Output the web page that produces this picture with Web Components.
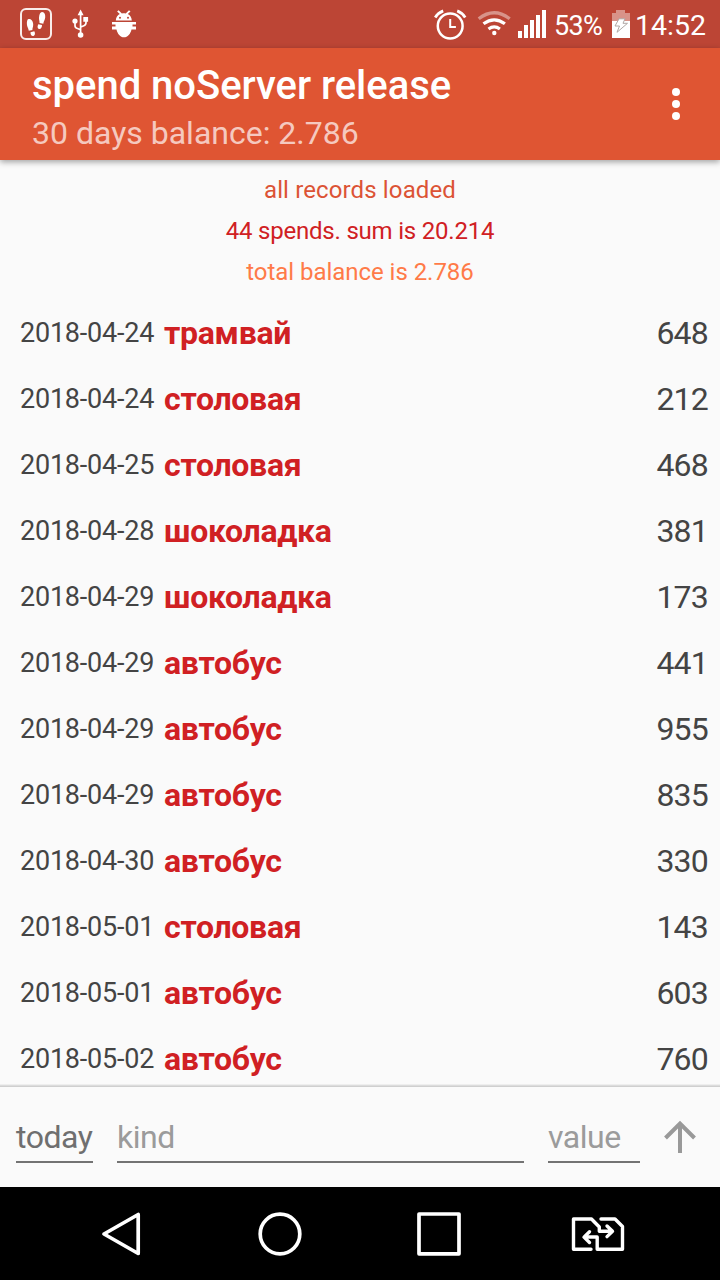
<!DOCTYPE html>
<html lang="ru">
<head>
<meta charset="utf-8">
<title>spend</title>
<style>
html,body{margin:0;padding:0}
body{width:720px;height:1280px;overflow:hidden;background:#fafafa;font-family:Roboto,"Noto Sans",sans-serif}
</style>
</head>
<body>
<spend-app></spend-app>
<script>
const define = (name, html) => {
  const t = document.createElement('template');
  t.innerHTML = html;
  customElements.define(name, class extends HTMLElement {
    constructor() {
      super();
      this.attachShadow({mode: 'open'}).append(t.content.cloneNode(true));
    }
  });
};

define('status-bar', `<style>
:host{display:block;height:48px;background:#bc4535;color:#fff}
.bar{display:flex;height:48px;align-items:center;position:relative}
svg{display:block;flex:none}
.l{width:434px;flex:none}
.pct,.time{line-height:48px;padding-top:2px;box-sizing:border-box;height:48px;white-space:nowrap;flex:none}
.pct{font-size:27px;letter-spacing:-.7px;width:57px}
.time{font-size:28.5px;margin-left:4px}
</style>
<div class="bar">
<svg class="l" width="434" height="48" viewBox="0 0 434 48" fill="#fff">
<rect x="21" y="9" width="30" height="30" rx="5" fill="none" stroke="#fff" stroke-width="2" stroke-opacity=".9"/>
<path d="M28.500 19c2.700-.6 4.700 2.200 4.700 5.500 0 2.700-.8 3.300-.8 5.500l-3.600.8c-.4-2.700-1.800-3.800-1.900-6.600-.1-2.600.3-4.800 1.600-5.200zM30.500 32.200l3.800-1c1.200 2.200.7 4.300-.8 4.700-1.800.5-3.200-1.400-3-3.700zM42.200 12c2.400.3 3.300 2.600 3 5.500-.3 2.800-1.600 3.800-1.900 6.200l-3.800-.8c.2-2.300-.7-3.100-.5-5.500.3-3.300 1.400-5.600 3.200-5.400zM38.300 24.200l3.700.8c.1 2.400-1.100 4.200-2.900 3.900-1.600-.3-2.100-2.400-.8-4.700z"/>
<path d="M80.600 15v20M75 22v3.500q0 2.500 2.500 3l3 1.200M86 19v3.500q0 2.500-2.200 3.200l-3 1.300" fill="none" stroke="#fff" stroke-width="1.700"/>
<path d="M80.600 9.500l3 5.700h-6zM83.300 17h4.800v4.800h-4.800z"/><circle cx="75" cy="21" r="2.600"/><circle cx="80.600" cy="35" r="2.800"/>
<path d="M116 20.400c.2-3 1.700-5.200 4-6.300l-2.700-2.600 1.500-1.200 3.300 3.100c1.200-.3 2.600-.3 3.800 0l3.300-3.100 1.500 1.200-2.700 2.600c2.300 1.100 3.800 3.300 4 6.300z" transform="translate(-.2 0)"/>
<circle cx="120" cy="17.800" r="1" fill="#bc4535"/><circle cx="128" cy="17.800" r="1" fill="#bc4535"/>
<path d="M112 22h24v2.500h-3.500v2H136v3h-4.500c-1 4.500-3.800 7.800-7.500 7.800s-6.500-3.300-7.500-7.800H112v-3h3.500v-2H112z"/>
</svg>
<svg width="120" height="48" viewBox="434 0 120 48" fill="none" stroke="#fff">
<circle cx="450.200" cy="26" r="12.400" stroke-width="2.500"/><path d="M450.200 19v8h5.700" stroke-width="2"/>
<path d="M435.200 17.500q3-4.700 8-6.600M465.200 17.500q-3-4.700-8-6.600" stroke-width="2.800"/>
<path d="M478.700 18.800q15.500-12 31 0" stroke-width="3.300" opacity=".42"/>
<path d="M483.500 23.800q10.700-8 21.400 0M488.500 29q5.700-4.200 11.400 0" stroke-width="3.200"/><circle cx="494.300" cy="33" r="2.200" fill="#fff" stroke="none"/>
<path d="M518 31h4v7h-4zM524 25h4v13h-4zM530 20h4v18h-4zM536 15h4v23h-4zM542 10h4v28h-4z" fill="#fff" stroke="none"/>
</svg>
<span class="pct">53%</span>
<svg width="20" height="48" viewBox="611 0 20 48"><path d="M616 10h9v3h5v8h-18v-8h4z" fill="#fff" opacity=".42"/><path d="M612 21h18v17h-18z" fill="#fff"/><path d="M619 18.800h6l-2 4.500h4.500l-10.500 9 2.500-6.300h-4.500z" fill="#fff" stroke="#b0a8a5" stroke-width="1"/></svg>
<span class="time">14:52</span>
</div>`);

define('app-toolbar', `<style>
:host{display:block;height:112px;background:#df5533;color:#fff;position:relative;z-index:2;box-shadow:0 2px 6px rgba(0,0,0,.36)}
.row{display:flex;justify-content:space-between;height:112px}
.t{padding:15px 0 0 32px;white-space:nowrap}
.a{font-size:40px;font-weight:500;line-height:46px;letter-spacing:-.03px}
.b{font-size:32px;line-height:38px;margin-top:5px;color:rgba(255,255,255,.7)}
svg{display:block}
</style>
<div class="row"><div class="t"><div class="a"><slot name="title"></slot></div><div class="b"><slot name="subtitle"></slot></div></div>
<svg width="88" height="112" fill="#fff"><circle cx="44" cy="44" r="4"/><circle cx="44" cy="56" r="4"/><circle cx="44" cy="68" r="4"/></svg></div>`);

define('summary-line', `<style>
:host{display:block;height:41px;line-height:41px;text-align:center;font-size:24px}
</style><slot></slot>`);

customElements.define('spend-row', class extends HTMLElement {
  connectedCallback() {
    this.attachShadow({mode: 'open'}).innerHTML = `<style>
:host{display:flex;height:66px;line-height:66px;padding:0 12px 0 20px;color:#444;white-space:nowrap}
.d{font-size:27px;width:144px;letter-spacing:-.22px}
.k{font-size:32px;font-weight:700;color:#d02023;flex:1;letter-spacing:-.28px}
.v{font-size:32px;letter-spacing:-.8px}
</style><span class="d">${this.getAttribute('date')}</span><span class="k"><slot></slot></span><span class="v">${this.getAttribute('value')}</span>`;
  }
});

define('text-field', `<style>
:host{display:block;box-sizing:border-box;height:48px;border-bottom:2px solid #737373;font-size:32px;line-height:44px;letter-spacing:-.45px;color:#9b9b9b;white-space:nowrap}
</style><slot></slot>`);

define('entry-bar', `<style>
:host{display:block;height:103px;background:#fafafa}
.line{height:3px;background:linear-gradient(#eee 0 1px,#dcdcdc 1px 2px,#cfcfcf 2px)}
.row{display:flex;padding:28px 24px 0 16px;height:72px}
.d{width:77px;margin-right:24px;color:#6f6f6f}
.k{width:407px;margin-right:24px}
.v{width:92px;margin-right:24px}
svg{display:block}
</style><div class="line"></div><div class="row"><text-field class="d">today</text-field><text-field class="k">kind</text-field><text-field class="v">value</text-field>
<svg width="32" height="48" viewBox="664 1115 32 48" fill="none" stroke="#999" stroke-width="4"><path d="M680 1153v-28M665.500 1138l14.500-14.500 14.500 14.500"/></svg></div>`);

define('nav-bar', `<style>
:host{display:block;height:93px;background:#000}
svg{display:block}
</style><svg width="720" height="93" viewBox="0 1187 720 93" fill="none" stroke="#fff" stroke-width="3.700" stroke-linejoin="round" stroke-linecap="round">
<path d="M138.200 1214.500v39l-34.200-19.500z"/>
<circle cx="280" cy="1234" r="19.800"/>
<path d="M419 1214h40v39.800H419z"/>
<path d="M591 1249.300h-17.500v-30.300h18l7.800 8v4.300h10.500M607 1226l5.500 5.300-5.500 5.300M601 1219h14l7.500 7.500v22.800h-25.300v-12.300h-11M589.500 1231.700l-5.500 5.400 5.500 5.400" stroke-width="3.400"/>
</svg>`);

define('spend-app', `<style>
:host{display:flex;flex-direction:column;width:720px;height:1280px;background:#fafafa}
status-bar,app-toolbar,entry-bar,nav-bar{flex:none}
main{flex:1;min-height:0;overflow:hidden;padding-top:10px}
.rows{padding-top:7px}
</style>
<status-bar></status-bar>
<app-toolbar><span slot="title">spend noServer release</span><span slot="subtitle">30 days balance: 2.786</span></app-toolbar>
<main>
<summary-line style="color:#dc5335;letter-spacing:.13px">all records loaded</summary-line>
<summary-line style="color:#d02023;letter-spacing:-.2px">44 spends. sum is 20.214</summary-line>
<summary-line style="color:#ff7a48;letter-spacing:-.04px">total balance is 2.786</summary-line>
<div class="rows">
<spend-row date="2018-04-24" value="648">трамвай</spend-row>
<spend-row date="2018-04-24" value="212">столовая</spend-row>
<spend-row date="2018-04-25" value="468">столовая</spend-row>
<spend-row date="2018-04-28" value="381">шоколадка</spend-row>
<spend-row date="2018-04-29" value="173">шоколадка</spend-row>
<spend-row date="2018-04-29" value="441">автобус</spend-row>
<spend-row date="2018-04-29" value="955">автобус</spend-row>
<spend-row date="2018-04-29" value="835">автобус</spend-row>
<spend-row date="2018-04-30" value="330">автобус</spend-row>
<spend-row date="2018-05-01" value="143">столовая</spend-row>
<spend-row date="2018-05-01" value="603">автобус</spend-row>
<spend-row date="2018-05-02" value="760">автобус</spend-row>
</div>
</main>
<entry-bar></entry-bar>
<nav-bar></nav-bar>`);
</script>
</body>
</html>
